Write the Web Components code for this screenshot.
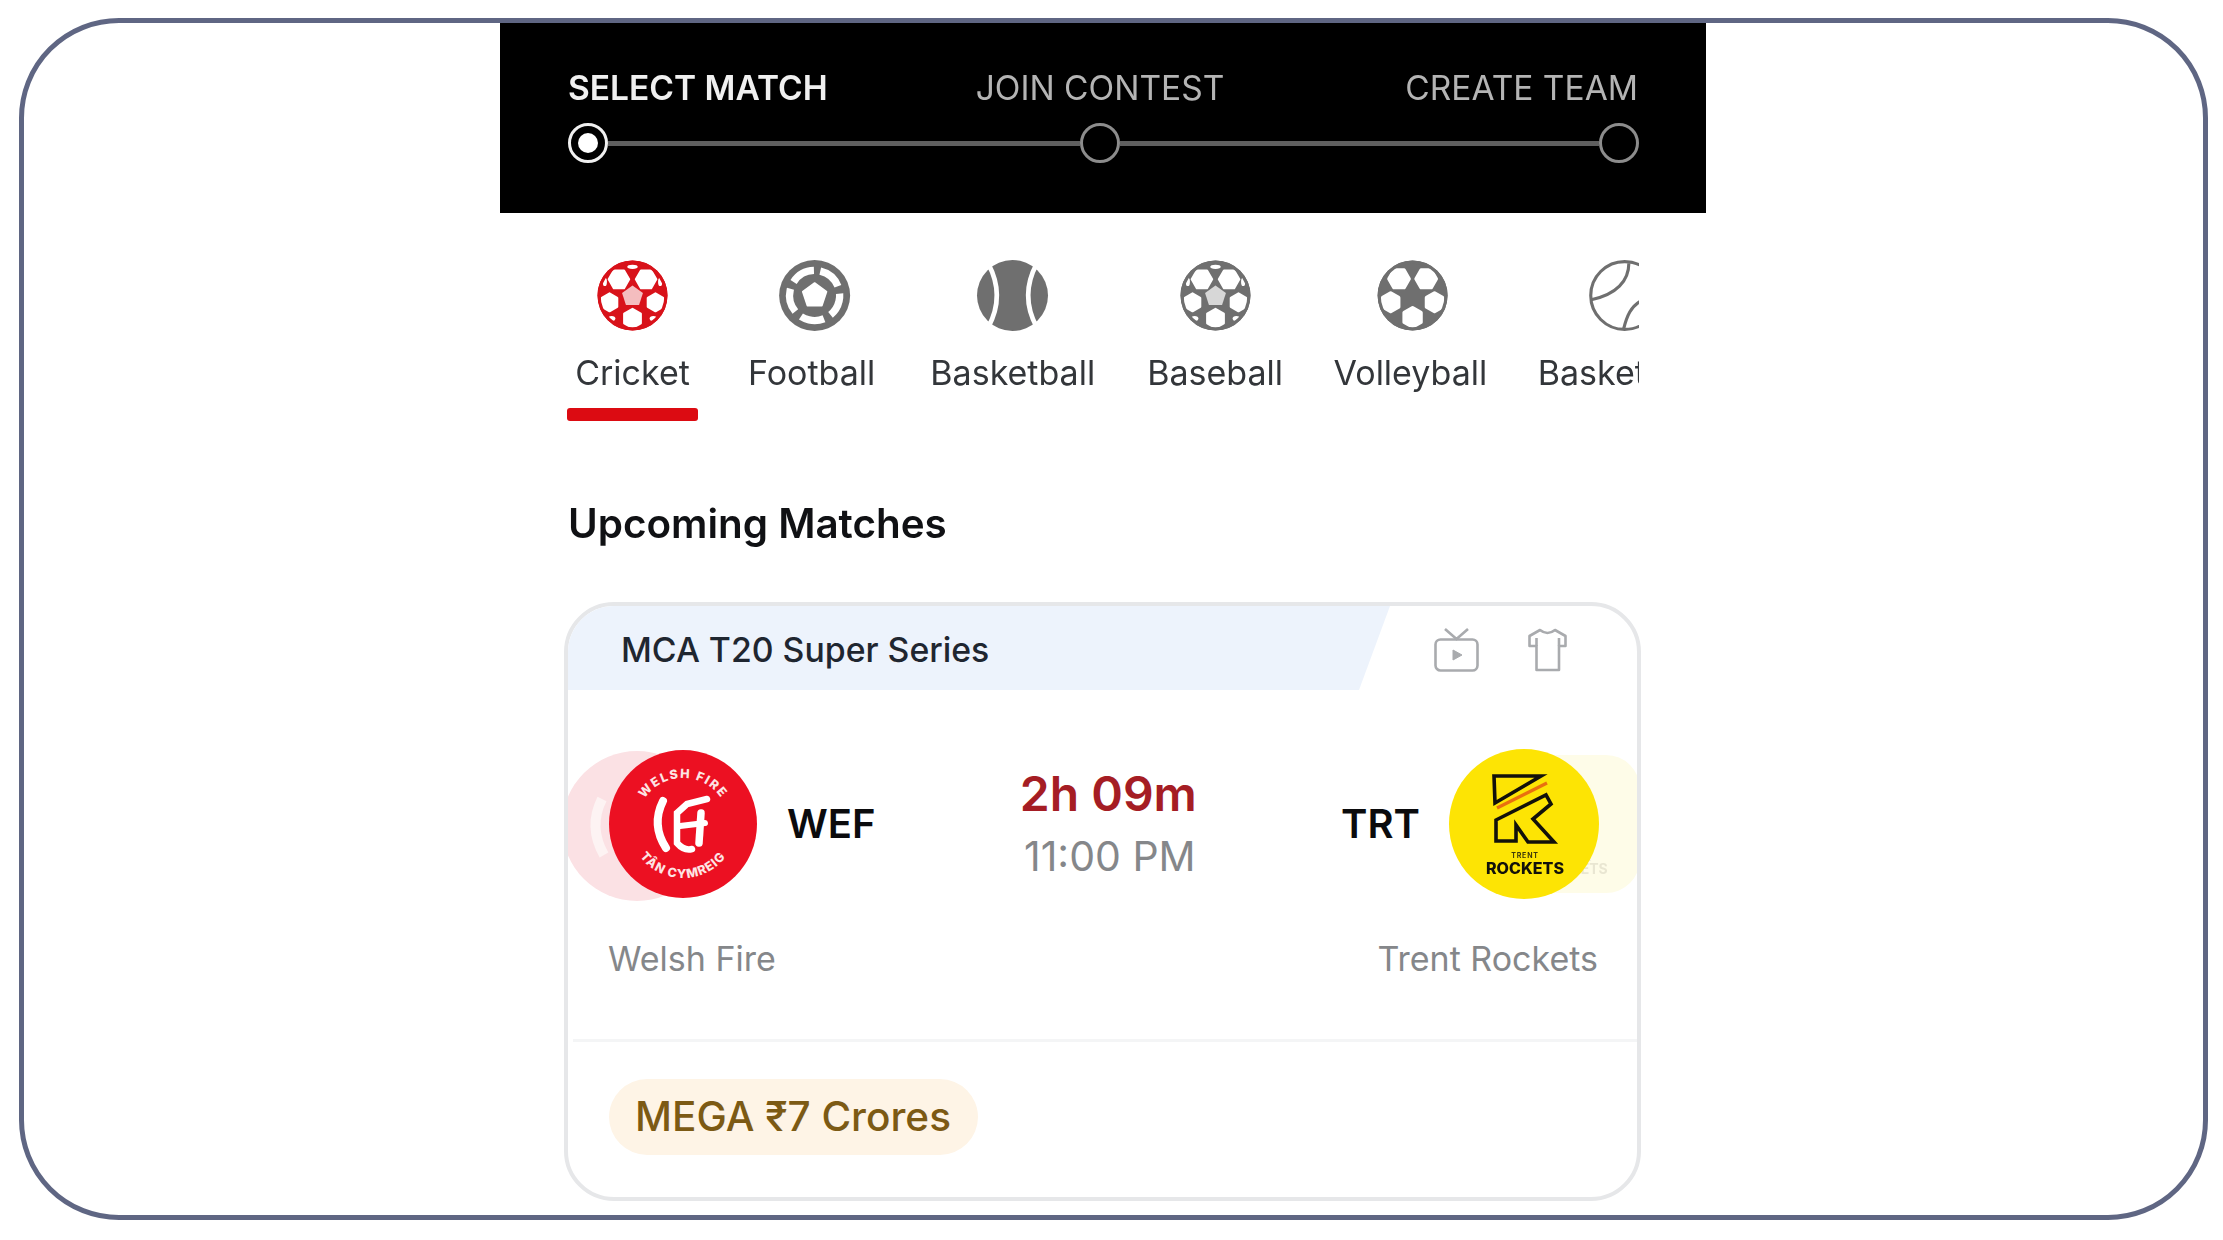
<!DOCTYPE html>
<html>
<head>
<meta charset="utf-8">
<title>Select match</title>
<style>
  html, body { margin: 0; padding: 0; background: #fff; }
  body { font-family: "Inter", "Liberation Sans", sans-serif; width: 2223px; height: 1240px; overflow: hidden; }
</style>
</head>
<body>
<app-frame>
  <step-bar></step-bar>
  <sport-tabs>
    <sport-tab kind="panels" label="Cricket" active></sport-tab>
    <sport-tab kind="star" label="Football" style="margin-right:3px"></sport-tab>
    <sport-tab kind="seam" label="Basketball"></sport-tab>
    <sport-tab kind="panels" label="Baseball" style="margin-right:-1.5px"></sport-tab>
    <sport-tab kind="spots" label="Volleyball" style="margin-right:-1.5px"></sport-tab>
    <sport-tab kind="tennis" label="Basketball"></sport-tab>
  </sport-tabs>
  <section-title>Upcoming Matches</section-title>
  <match-card></match-card>
</app-frame>

<script>
class AppFrame extends HTMLElement {
  constructor() {
    super();
    this.attachShadow({ mode: 'open' });
    this.shadowRoot.innerHTML = `
      <style>
        :host {
          display: flex;
          flex-direction: column;
          align-items: flex-start;
          box-sizing: border-box;
          width: 2189px;
          height: 1202px;
          margin: 18px 0 0 19px;
          padding-left: 476px;
          background: #fff;
          border: 5px solid #5f6683;
          border-radius: 100px;
          overflow: hidden;
        }
      </style>
      <slot></slot>
    `;
  }
}
customElements.define('app-frame', AppFrame);

class StepBar extends HTMLElement {
  constructor() {
    super();
    this.attachShadow({ mode: 'open' });
    this.shadowRoot.innerHTML = `
      <style>
        :host {
          display: block;
          box-sizing: border-box;
          width: 1206px;
          height: 190px;
          padding: 43px 67px 0 68px;
          background: #000;
          filter: blur(.7px);
        }
        .labels { display: grid; grid-template-columns: 1fr auto 1fr; height: 44px; align-items: center; }
        .label { font-size: 33.5px; line-height: 44px; color: #b4b4b4; white-space: nowrap; }
        .label.on { color: #f0f0f0; font-weight: 600; }
        .label.mid { margin-right: 7px; }
        .label.end { justify-self: end; margin-right: 1px; }
        .track { display: flex; align-items: center; margin-top: 13px; }
        .dot { flex: none; box-sizing: border-box; width: 40px; height: 40px; border: 3px solid #8c8c8c; border-radius: 50%; }
        .dot.on { display: flex; align-items: center; justify-content: center; border-color: #f0f0f0; }
        .dot.on::after { content: ""; width: 20px; height: 20px; border-radius: 50%; background: #fff; }
        .line { height: 5px; background: #5f5f5f; }
      </style>
      <div class="labels">
        <div class="label on">SELECT MATCH</div>
        <div class="label mid">JOIN CONTEST</div>
        <div class="label end">CREATE TEAM</div>
      </div>
      <div class="track">
        <div class="dot on"></div>
        <div class="line" style="flex:471"></div>
        <div class="dot"></div>
        <div class="line" style="flex:479"></div>
        <div class="dot"></div>
      </div>
    `;
  }
}
customElements.define('step-bar', StepBar);

class SportTabs extends HTMLElement {
  constructor() {
    super();
    this.attachShadow({ mode: 'open' });
    this.shadowRoot.innerHTML = `
      <style>
        :host {
          display: flex;
          gap: 52px;
          box-sizing: border-box;
          width: 1072px;
          margin-left: 67px;
          padding-top: 48px;
          overflow: hidden;
          filter: blur(.6px);
        }
      </style>
      <slot></slot>
    `;
  }
}
customElements.define('sport-tabs', SportTabs);

// hexagon-ish patch of a ball, cx/cy in the 68 box
function patch(cx, cy, r, rot, fill, sw = 2) {
  const pts = [];
  for (let i = 0; i < 6; i++) {
    const a = (rot + i * 60) * Math.PI / 180;
    pts.push((cx + r * Math.cos(a)).toFixed(1) + ',' + (cy + r * Math.sin(a)).toFixed(1));
  }
  return `<polygon points="${pts.join(' ')}" fill="${fill}" stroke="${fill}" stroke-width="${sw}" stroke-linejoin="round"/>`;
}

function ballIcon(kind, c) {
  if (kind === 'panels') {
    const rim = [[34, 6.5, 5, 2], [7.5, 21, 2, 4], [60.5, 21, 2, 4], [14, 56, 3.6, 2.4], [54, 56, 3.6, 2.4]];
    return `
      <circle cx="34" cy="34" r="33.5" fill="${c}"/>
      ${rim.map(p => `<ellipse cx="${p[0]}" cy="${p[1]}" rx="${p[2]}" ry="${p[3]}" fill="#fff"/>`).join('')}
      ${patch(21, 18.5, 9.8, 0, '#fff')}
      ${patch(47, 18.5, 9.8, 0, '#fff')}
      ${patch(12, 40.5, 8.6, 30, '#fff')}
      ${patch(56, 40.5, 8.6, 30, '#fff')}
      ${patch(34, 56, 9.2, 30, '#fff')}
      <polygon points="34,24.5 44,31.5 40.3,43 27.7,43 24,31.5" fill="#fff" opacity=".72"/>
      <circle cx="34" cy="34" r="32" fill="none" stroke="${c}" stroke-width="3"/>
    `;
  }
  if (kind === 'star') {
    return `
      <g transform="translate(3 0)">
        <circle cx="34" cy="34" r="34" fill="${c}"/>
        <circle cx="34" cy="34" r="24" fill="none" stroke="#fff" stroke-width="7" stroke-dasharray="23 7.16" transform="rotate(-77 34 34)"/>
        <polygon points="34,22 45.4,30.3 41,43.7 27,43.7 22.6,30.3" fill="#fff" stroke="#fff" stroke-width="1.5" stroke-linejoin="round"/>
      </g>
    `;
  }
  if (kind === 'seam') {
    return `
      <circle cx="34" cy="34" r="34" fill="${c}"/>
      <path d="M11 4 Q27 34 11 64" fill="none" stroke="#fff" stroke-width="4.5"/>
      <path d="M57 4 Q41 34 57 64" fill="none" stroke="#fff" stroke-width="4.5"/>
    `;
  }
  if (kind === 'spots') {
    return `
      <g transform="translate(2 0)">
        <circle cx="34" cy="34" r="33.5" fill="${c}"/>
        ${patch(21, 18, 9.6, 0, '#fff', 3.5)}
        ${patch(47, 18, 9.6, 0, '#fff', 3.5)}
        ${patch(13, 40.5, 8.8, 30, '#fff', 3.5)}
        ${patch(55, 40.5, 8.8, 30, '#fff', 3.5)}
        ${patch(34, 55, 9.2, 30, '#fff', 3.5)}
        <circle cx="34" cy="34" r="32" fill="none" stroke="${c}" stroke-width="3"/>
      </g>
    `;
  }
  return `
    <g transform="translate(4 0)">
      <circle cx="34" cy="34" r="32.5" fill="none" stroke="${c}" stroke-width="3"/>
      <path d="M38 3 C38 20 26 33 2 38" fill="none" stroke="${c}" stroke-width="3"/>
      <path d="M50 39 C40 44 36 54 33 66" fill="none" stroke="${c}" stroke-width="3"/>
    </g>
  `;
}

class SportTab extends HTMLElement {
  constructor() {
    super();
    this.attachShadow({ mode: 'open' });
  }
  connectedCallback() {
    const on = this.hasAttribute('active');
    const color = on ? '#d8121a' : '#6f6f6f';
    this.shadowRoot.innerHTML = `
      <style>
        :host { display: flex; flex: none; flex-direction: column; align-items: center; width: ${on ? '131px' : 'auto'}; margin-right: ${on ? '-2px' : '0'}; }
        svg { display: block; width: 71px; height: 71px; flex: none; margin-top: -1.5px; overflow: visible; }
        .label { margin-top: 20.5px; font-size: 34px; line-height: 44px; color: #33363a; white-space: nowrap; }
        .bar { align-self: stretch; height: 13px; margin-top: 13px; border-radius: 3px; background: ${on ? '#dc0b12' : 'transparent'}; }
      </style>
      <svg viewBox="0 0 68 68">${ballIcon(this.getAttribute('kind'), color)}</svg>
      <div class="label">${this.getAttribute('label')}</div>
      <div class="bar"></div>
    `;
  }
}
customElements.define('sport-tab', SportTab);

class SectionTitle extends HTMLElement {
  constructor() {
    super();
    this.attachShadow({ mode: 'open' });
    this.shadowRoot.innerHTML = `
      <style>
        :host {
          display: block;
          margin: 78px 0 0 68px;
          font-size: 40.4px;
          line-height: 50px;
          font-weight: 600;
          color: #101114;
          filter: blur(.6px);
        }
      </style>
      <slot></slot>
    `;
  }
}
customElements.define('section-title', SectionTitle);

class TeamLogo extends HTMLElement {
  constructor() {
    super();
    this.attachShadow({ mode: 'open' });
  }
  connectedCallback() {
    const fire = this.getAttribute('team') === 'fire';
    const font = 'font-family="Inter, Liberation Sans, sans-serif"';
    this.shadowRoot.innerHTML = `
      <style>
        :host { display: block; position: relative; flex: none; width: 150px; height: 150px; }
        svg { display: block; position: absolute; top: 0; left: 0; width: 150px; height: 150px; overflow: visible; }
        .ghost { top: 2px; left: ${fire ? '-46px' : '41px'}; }
      </style>
      ${fire ? `
      <svg class="ghost" viewBox="0 0 150 150">
        <circle cx="75" cy="75" r="75" fill="#fbe1e4"/>
        <path d="M40 48 Q26 76 42 104" fill="none" stroke="#fdf3f3" stroke-width="10"/>
      </svg>
      <svg viewBox="0 0 150 150">
        <defs>
          <path id="up" d="M29 75 A46 46 0 0 1 121 75"/>
          <path id="down" d="M21 75 A54 54 0 0 0 129 75"/>
        </defs>
        <circle cx="75" cy="75" r="74" fill="#ec1022"/>
        <text ${font} font-size="12.5" font-weight="800" fill="#fde4e4" letter-spacing="1.6" text-anchor="middle"><textPath href="#up" startOffset="50%">WELSH FIRE</textPath></text>
        <text ${font} font-size="12.5" font-weight="800" fill="#fde4e4" letter-spacing="1" text-anchor="middle"><textPath href="#down" startOffset="50%">TÂN CYMREIG</textPath></text>
        <g fill="none" stroke="#fff" stroke-linecap="round">
          <path d="M55 52 Q43 76 58 99" stroke-width="8"/>
          <path d="M99 50 L79 55 L69 64 L69 94 Q76 102 84 100" stroke-width="6.5"/>
          <path d="M72 77 L97 74" stroke-width="6"/>
          <path d="M93 64 L91 94" stroke-width="7.5"/>
        </g>
      </svg>` : `
      <svg class="ghost" viewBox="0 0 150 150">
        <rect x="0" y="4" width="150" height="138" rx="34" fill="#fefce8"/>
        <path d="M58 24 L90 62 L82 82 L98 108 L70 104" fill="none" stroke="#e6e4e0" stroke-width="3"/>
        <path d="M60 30 L82 50" fill="none" stroke="#f5d4dc" stroke-width="3"/>
        <text x="94" y="123" ${font} font-size="14" font-weight="700" fill="#e9e6d2" text-anchor="middle">CKETS</text>
      </svg>
      <svg viewBox="0 0 150 150">
        <circle cx="75" cy="75" r="75" fill="#fde404"/>
        <path d="M45 27 L92 27 L46 54 Z" fill="none" stroke="#12110a" stroke-width="3.6" stroke-linejoin="miter"/>
        <path d="M48 59 L98 34" fill="none" stroke="#e9700f" stroke-width="3.4"/>
        <path d="M47 71 L97 46 L102 55 L84 70 L105 93 L79 93 L67 76 L67 92 L47 92 Z" fill="none" stroke="#12110a" stroke-width="3.6" stroke-linejoin="miter"/>
        <text x="76" y="109" ${font} font-size="7" font-weight="700" fill="#3c370a" text-anchor="middle" letter-spacing=".8">TRENT</text>
        <text x="76" y="125" ${font} font-size="15.5" font-weight="800" fill="#12110a" text-anchor="middle" textLength="78" lengthAdjust="spacingAndGlyphs">ROCKETS</text>
      </svg>`}
    `;
  }
}
customElements.define('team-logo', TeamLogo);

class MatchCard extends HTMLElement {
  constructor() {
    super();
    this.attachShadow({ mode: 'open' });
    this.shadowRoot.innerHTML = `
      <style>
        :host {
          display: block;
          box-sizing: border-box;
          width: 1077px;
          height: 599px;
          margin: 53px 0 0 64px;
          background: #fff;
          border: 4px solid #e6e7e9;
          border-radius: 50px;
          overflow: hidden;
          filter: blur(.6px);
        }
        .head { display: flex; align-items: stretch; height: 84px; }
        .series {
          flex: none;
          box-sizing: border-box;
          width: 822px;
          padding: 3px 0 0 53px;
          font-size: 33.8px;
          line-height: 82px;
          font-weight: 500;
          color: #1f2630;
          background: #edf3fc;
          clip-path: polygon(0 0, 100% 0, calc(100% - 31px) 100%, 0 100%);
        }
        .tools { display: flex; align-items: center; gap: 49px; padding: 3px 0 0 44px; }
        .tools svg { display: block; flex: none; }
        .teams { display: flex; align-items: center; height: 150px; margin-top: 59px; padding: 0 38px 0 40px; }
        .code { font-size: 40px; font-weight: 600; line-height: 46px; color: #0b0b0d; }
        .code.l { margin-left: 29px; }
        .code.r { margin-right: 29px; }
        .mid { flex: 1; display: flex; flex-direction: column; align-items: center; margin-top: -3px; }
        .left { font-size: 48px; line-height: 58px; font-weight: 600; color: #a51d24; }
        .time { font-size: 41px; line-height: 50px; color: #85878a; margin: 8px 0 0 3px; }
        .names { display: flex; justify-content: space-between; padding: 0 39px 0 40px; margin-top: 38px; font-size: 34px; line-height: 44px; color: #85878a; }
        .rule { height: 3px; margin: 58px 0 0 5px; background: #f4f5f6; }
        .pill {
          display: inline-block;
          margin: 37px 0 0 41px;
          padding: 0 27px 0 26px;
          font-size: 40.5px;
          line-height: 76px;
          font-weight: 500;
          color: #7c5a14;
          background: #fef4e6;
          border-radius: 38px;
        }
      </style>
      <div class="head">
        <div class="series">MCA T20 Super Series</div>
        <div class="tools">
          <svg width="45" height="44" viewBox="0 0 45 44" fill="none" stroke="#a9abae" stroke-width="2.6">
            <rect x="1.5" y="11.5" width="42" height="31" rx="5"/>
            <path d="M11 1 L22.5 11 L34 1"/>
            <path d="M19 22 L28 27 L19 32 Z" fill="#a9abae" stroke-width="1"/>
          </svg>
          <svg width="39" height="44" viewBox="0 0 39 44" fill="none" stroke="#a9abae" stroke-width="2.6" stroke-linejoin="round">
            <path d="M12 2 L1.5 8 L1.5 18 L8.5 18 L8.5 42 L31 42 L31 18 L37.5 18 L37.5 8 L27 2 Q19.5 8 12 2 Z"/>
            <path d="M8.5 18 L8.5 10 M31 18 L31 10"/>
          </svg>
        </div>
      </div>
      <div class="teams">
        <team-logo team="fire"></team-logo>
        <div class="code l">WEF</div>
        <div class="mid">
          <div class="left">2h 09m</div>
          <div class="time">11:00 PM</div>
        </div>
        <div class="code r">TRT</div>
        <team-logo team="rockets"></team-logo>
      </div>
      <div class="names"><span>Welsh Fire</span><span>Trent Rockets</span></div>
      <div class="rule"></div>
      <div class="pill">MEGA ₹7 Crores</div>
    `;
  }
}
customElements.define('match-card', MatchCard);
</script>
</body>
</html>
